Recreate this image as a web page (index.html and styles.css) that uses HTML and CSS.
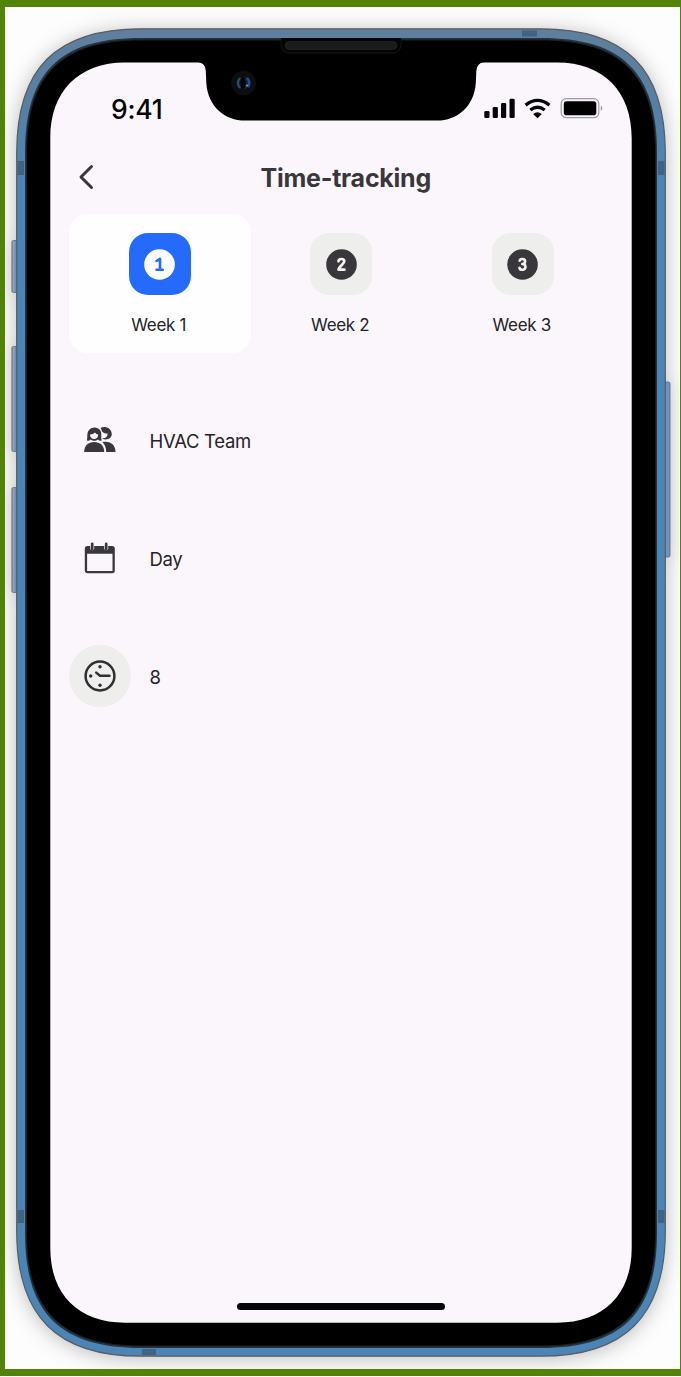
FILE: index.html
```html
<!DOCTYPE html>
<html lang="en">
<head>
<meta charset="utf-8">
<title>Time-tracking</title>
<link rel="stylesheet" href="styles.css">
</head>
<body>
<main class="stage">
  <div class="backdrop"></div>
  <svg class="device" viewBox="0 0 681 1377" aria-hidden="true">
    <defs>
      <linearGradient id="metal" x1="0" y1="28" x2="0" y2="180" gradientUnits="userSpaceOnUse">
        <stop offset="0" stop-color="#5f7f9d"/><stop offset=".5" stop-color="#577fa4"/><stop offset="1" stop-color="#4b85b7"/>
      </linearGradient>
      <linearGradient id="key" x1="0" x2="1" y1="0" y2="0">
        <stop offset="0" stop-color="#92969c"/><stop offset=".35" stop-color="#9ba5b0"/><stop offset=".5" stop-color="#6690c0"/><stop offset="1" stop-color="#6f94bf"/>
      </linearGradient>
    </defs>
    <!-- side keys -->
    <g fill="url(#key)" stroke="#62666c" stroke-width=".8">
      <rect x="11.900" y="240.500" width="6" height="52" rx="1.500"/>
      <rect x="11.900" y="346.500" width="6" height="105" rx="1.500"/>
      <rect x="11.900" y="487.500" width="6" height="105" rx="1.500"/>
      <rect x="664" y="382" width="6" height="175" rx="1.500" fill="#6f94b9"/>
    </g>
    <!-- metal band and bezel -->
    <path class="band" d="M16.700 153C16.700 68 56.500 28.800 141 28.800H540.500C625 28.800 665.300 68 665.300 153V1231C665.300 1316 625 1356.200 540.500 1356.200H141C56.500 1356.200 16.700 1316 16.700 1231Z"/>
    <path d="M25 153C25 72 60 38 141 38H541C622 38 657 72 657 153V1233C657 1313 622 1348 541 1348H141C60 1348 25 1313 25 1233Z" fill="#26333d"/>
    <path d="M26.500 153C26.500 74 62 40 141 40H541C620 40 655.500 74 655.500 153V1233C655.500 1311 620 1346 541 1346H141C62 1346 26.500 1311 26.500 1233Z" fill="#000" stroke="#1b1e20" stroke-width="1"/>
    <g fill="#3f6382">
      <rect x="522" y="30.500" width="15" height="6"/><rect x="17.500" y="161" width="6.500" height="14"/><rect x="658" y="161" width="6.500" height="14"/>
      <rect x="17.500" y="1210" width="6.500" height="13"/><rect x="658" y="1210" width="6.500" height="13"/><rect x="142" y="1349" width="14" height="6"/>
    </g>
    <!-- screen with notch -->
    <path d="M50.300 138C50.300 91.500 78.500 62.500 125 62.500H198Q205.500 62.500 205.800 71L206.300 83C208 107 225 120.600 245 120.600H437C457 120.600 474 107 475.800 83L476.300 71Q477 62.500 484 62.500H557C603.500 62.500 631.700 91.500 631.700 138V1248C631.700 1294.500 603.500 1322.700 557 1322.700H125C78.500 1322.700 50.300 1294.500 50.300 1248Z" fill="#faf6fc"/>
    <!-- speaker and camera -->
    <path d="M281 38V44Q281 53 290 53H392Q401 53 401 44V38" fill="#030404" stroke="#141617"/>
    <rect x="285" y="41.500" width="112" height="8" rx="4" fill="#191b1c" stroke="#25282a" stroke-width=".6"/>
    <circle cx="243.500" cy="83" r="12.500" fill="#0b0d0f"/>
    <circle cx="243.500" cy="83" r="6.500" fill="#10202e"/>
    <path d="M240 78Q235.500 83 240 88" fill="none" stroke="#265463" stroke-width="2"/>
    <path d="M247 78Q251 82 248 87" fill="none" stroke="#2848a0" stroke-width="2.500"/>
    <ellipse cx="243" cy="83" rx="2.500" ry="6" fill="#000"/>
    <circle cx="247" cy="85.500" r="1" fill="#8c9bc0"/>
  </svg>

  <div class="screen">
    <div class="status">
      <span class="time">9:41</span>
      <svg class="signals" viewBox="484 97 119 22" width="119" height="22" aria-label="Signal, Wi-Fi and battery">
        <g fill="#050507"><rect x="484.300" y="111" width="5.200" height="7" rx="1.300"/><rect x="492.700" y="107" width="5.200" height="11" rx="1.300"/><rect x="501" y="103" width="5.200" height="15" rx="1.300"/><rect x="509.500" y="98.700" width="5.200" height="19.300" rx="1.300"/></g>
        <g fill="none" stroke="#050507" stroke-width="3.300"><path d="M525.600 105.100Q537.500 95.700 549.400 105.100"/><path d="M530.300 110Q537.500 104.500 544.700 110"/></g>
        <path d="M533.100 113.900Q537.500 110.500 541.900 113.900L537.500 118.300Z" fill="#050507"/>
        <rect x="561.200" y="98.700" width="37.600" height="19" rx="5" fill="none" stroke="#9d9b9f" stroke-width="1.200"/>
        <rect x="563.800" y="101.200" width="32.500" height="14" rx="2.800" fill="#000"/>
        <path d="M600.800 105.500Q603.800 108.200 600.800 111Z" fill="#99979c"/>
      </svg>
    </div>
    <header class="header">
      <svg class="back" viewBox="0 0 16 26" width="16" height="26"><path d="M13.500 2.500L3 13L13.500 23.500" fill="none" stroke="#39373c" stroke-width="3" stroke-linecap="round" stroke-linejoin="round"/></svg>
      <h1 class="title">Time-tracking</h1>
    </header>
    <nav class="weeks">
      <div class="week week-active">
        <span class="tile"><svg width="31" height="31" viewBox="0 0 31 31"><circle cx="15.500" cy="15.500" r="15.300" fill="#fff"/><path d="M12.500 12L16 9.800V20.700M12.500 20.700H18.800" fill="none" stroke="#246bfd" stroke-width="2.600" stroke-linecap="round" stroke-linejoin="round"/></svg></span>
        <span class="label">Week 1</span>
      </div>
      <div class="week">
        <span class="tile"><svg width="31" height="31" viewBox="0 0 31 31"><circle cx="15.500" cy="15.500" r="15.300" fill="#39373c"/><path d="M12.500 12.300C12.500 9.200 18.300 9.200 18.300 12.300C18.300 15 12.700 17.500 12.500 20.700H18.500" fill="none" stroke="#f4f4f1" stroke-width="2.700" stroke-linecap="round" stroke-linejoin="round"/></svg></span>
        <span class="label">Week 2</span>
      </div>
      <div class="week">
        <span class="tile"><svg width="31" height="31" viewBox="0 0 31 31"><circle cx="15.500" cy="15.500" r="15.300" fill="#39373c"/><path d="M12.600 11.800C13 9.200 18.100 9.400 18.100 12.200Q18.100 15 15.300 15C19.500 15 19.500 20.800 15.500 20.800Q12.800 20.800 12.500 18.700" fill="none" stroke="#f4f4f1" stroke-width="2.600" stroke-linecap="round" stroke-linejoin="round"/></svg></span>
        <span class="label">Week 3</span>
      </div>
    </nav>
    <ul class="rows">
      <li class="row">
        <span class="icon"><svg width="32" height="26" viewBox="0 0 32 26" fill="#39373c">
          <path fill-rule="evenodd" d="M2.800 13.500C4 10.500 2.200 5.800 5.300 2.700C8.300-.4 13.600-.1 16 3C18.500 6.300 16.400 10.800 17.800 13.500Q15.500 14.500 14 12.500C12 14.200 8.700 14.300 6.700 12.500Q5 14.400 2.800 13.500ZM6.100 7.400C5.600 13.500 14.500 13.500 14.200 7.500Q12.100 7.200 11 5.400Q9.200 7.400 6.100 7.400Z"/>
          <path d="M16.500 1C20-.9 25.300.2 27 4C29.300 8.500 26.200 12.500 21.800 12.500Q19.500 12.500 18 11.200C22 11.500 24.200 9.200 23.300 6.200Q20.500 7 18 4.500Q17.700 2.500 16.500 1Z"/>
          <path d="M.2 25C.1 18.500 4.300 15 10.200 15S20.200 18.500 20.200 25Z"/><path d="M18.300 15.100C26.500 13.500 31.500 18 31.500 25H22.200Q22.200 18.800 18.300 15.100Z"/>
        </svg></span>
        <span class="value">HVAC Team</span>
      </li>
      <li class="row">
        <span class="icon"><svg width="32" height="32" viewBox="0 0 32 32">
          <path fill-rule="evenodd" fill="#39373c" d="M3 4H6.200V7Q8.200 9.500 10.200 7V4H20.200V7Q22.200 9.500 24.200 7V4H28Q30.800 4 30.800 6.500V28.500Q30.800 31.300 28.200 31.300H3.700Q.8 31.300.8 28.500V6.500Q.8 4 3 4ZM3.100 11.800V28.900H28.500V11.800Z"/>
          <path d="M8.200 1.800V7M22.200 1.800V7" stroke="#39373c" stroke-width="2.700" stroke-linecap="round"/>
        </svg></span>
        <span class="value">Day</span>
      </li>
      <li class="row">
        <span class="icon icon-round"><svg width="32" height="32" viewBox="0 0 32 32" fill="none" stroke="#302f33" stroke-width="2.500"><circle cx="16" cy="16" r="14.400"/><path d="M12.200 12.600L16 15.700H25.500" stroke-linecap="round" stroke-linejoin="round"/><g fill="#302f33" stroke="none"><circle cx="16" cy="6.700" r="1.700"/><circle cx="6.700" cy="16" r="1.700"/><circle cx="16" cy="25.300" r="1.700"/></g></svg></span>
        <span class="value">8</span>
      </li>
    </ul>
    <div class="home"></div>
  </div>
</main>
</body>
</html>
```

FILE: styles.css
```css
* { box-sizing: border-box; }
body { margin: 0; background: #fff; font-family: Inter, "Liberation Sans", sans-serif; color: #242327; }
.stage { display: grid; width: 681px; height: 1377px; overflow: hidden; }
.stage > * { grid-area: 1 / 1; }
.backdrop { height: 1376px; border: solid #528206; border-width: 7px 2px 7px 5px; background: #fdfdfd; }
.device { width: 681px; height: 1377px; clip-path: inset(7px 2px 8px 5px); filter: drop-shadow(0 2px 10px rgba(0, 0, 0, .26)); }
.band { fill: url(#metal); stroke: #5c5c5f; stroke-width: 1.2px; }
.screen { z-index: 1; display: flex; flex-direction: column; margin: 63px 49px 54px 50px; padding: 0 19px; }
.status { display: flex; justify-content: space-between; align-items: flex-start; padding: 34px 11px 0 42px; height: 87px; }
.time { font-size: 26.5px; line-height: 24px; font-weight: 500; letter-spacing: -.2px; color: #050507; }
.header { display: grid; grid-template-columns: 40px 1fr 40px; align-items: center; height: 54px; padding-left: 9px; }
.title { margin: 2px 0 0; text-align: center; font-size: 25px; line-height: 30px; font-weight: 700; letter-spacing: -.25px; color: #39373c; }
.back { display: block; }
.weeks { display: grid; grid-template-columns: repeat(3, 181.5px); margin-top: 10px; }
.week { display: flex; flex-direction: column; align-items: center; height: 139px; padding-top: 19px; border-radius: 18px; }
.week-active { background: #fefefe; }
.tile { display: grid; place-items: center; width: 62px; height: 62px; border-radius: 19px; background: #eeeeec; }
.week-active .tile { background: #246bfd; }
.label { margin: 19px 2px 0 0; font-size: 17px; line-height: 22px; letter-spacing: -.3px; }
.rows { list-style: none; margin: 56px 0 0; padding: 0; display: grid; gap: 56px; }
.row { display: flex; align-items: center; gap: 18.5px; height: 62px; }
.icon { display: grid; place-items: center; width: 62px; height: 62px; }
.icon-round { border-radius: 50%; background: #eeeeec; }
.value { margin-top: 2px; font-size: 18.5px; line-height: 24px; letter-spacing: -.3px; }
.home { width: 208px; height: 7px; margin: auto auto 13px 168px; border-radius: 4px; background: #050507; }
```
